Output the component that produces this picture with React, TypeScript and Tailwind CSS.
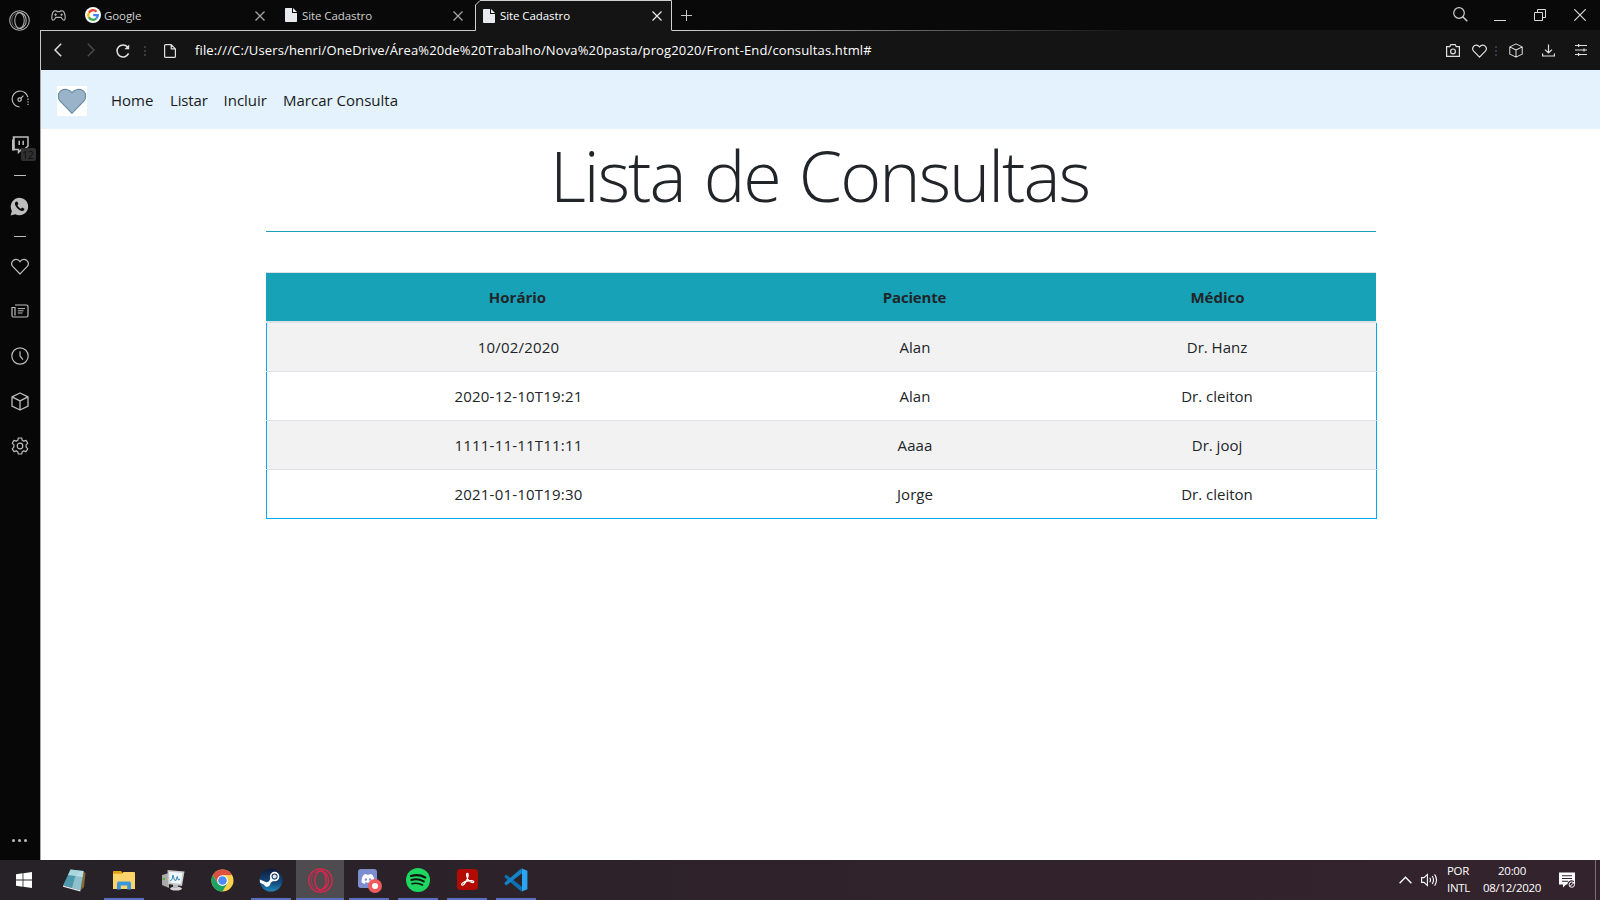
import type { ReactNode } from "react";
import { FaDiscord } from "react-icons/fa";

type IconProps = { w: number; h: number; className?: string; children: ReactNode };

function Icon({ w, h, className = "", children }: IconProps) {
  return (
    <svg
      width={w}
      height={h}
      viewBox={`0 0 ${w} ${h}`}
      fill="none"
      stroke="currentColor"
      strokeWidth={1.2}
      className={`shrink-0 ${className}`}
    >
      {children}
    </svg>
  );
}

const HEART = "M9 16 L1.9 8.7 A4.3 4.3 0 0 1 1.6 3.2 C3.2 0.6 7 0.7 9 3.6 C11 0.7 14.8 0.6 16.4 3.2 A4.3 4.3 0 0 1 16.1 8.7 Z";

function OperaRing({ size, className }: { size: number; className: string }) {
  return (
    <svg width={size} height={size} viewBox="0 0 24 24" fill="none" stroke="currentColor" strokeWidth={1.2} className={className}>
      <circle cx="12" cy="12" r="11.2" />
      <ellipse cx="12" cy="12" rx="5.4" ry="9" />
      <path d="M9.5 3.6 C12.5 1.6 19.6 4 19.6 12 S12.5 22.4 9.5 20.4" />
      <path d="M10 3.3 C5 4.3 3.3 8 3.3 12 S5 19.7 10 20.7" strokeWidth={0.6} />
    </svg>
  );
}

function Cube({ w, h, className }: { w: number; h: number; className?: string }) {
  return (
    <svg width={w} height={h} viewBox="0 0 18 19" fill="none" stroke="currentColor" strokeWidth={1.3} strokeLinejoin="round" className={className}>
      <path d="M9 1 L17 4.8 V14.2 L9 18 L1 14.2 V4.8 Z M1 4.8 L9 8.8 L17 4.8 M9 8.8 V18" />
    </svg>
  );
}

function Sidebar() {
  return (
    <aside className="flex w-10 shrink-0 flex-col items-center bg-[#070707] pr-px text-[#bdbdbd]">
      <div className="mt-2 flex h-6 items-center">
        <OperaRing size={21} className="text-[#b0b0b0]" />
      </div>
      <div className="mt-[55px] flex h-6 items-center">
        <Icon w={18} h={18}>
          <path d="M8.6 17 A8 8 0 1 1 16.9 7.2" />
          <path d="M17 8.6 V15" strokeDasharray="1.4 1.2" />
          <circle cx="8.6" cy="9.6" r="1.7" />
          <path d="M9.8 8.4 L12.4 5.6" />
        </Icon>
      </div>
      <div className="relative mt-[22px] flex h-6 items-center">
        <Icon w={18} h={18}>
          <path d="M2.5 1 L17 1 V10 L13.5 13.4 H10.5 L7.5 16.4 V13.4 H3 Z" strokeWidth={1.5} />
          <path d="M1 4 L3.6 1 V14.6 H1 Z" fill="currentColor" stroke="none" />
          <path d="M8.2 4.8 V9 M12.2 4.8 V9" strokeWidth={1.5} />
        </Icon>
        <span className="absolute top-[15px] left-[10px] flex h-[13px] w-[15px] items-center justify-center rounded-[2px] bg-[#303030] text-[10px] leading-none text-[#0c0c0c]">
          12
        </span>
      </div>
      <div className="mt-[18px] h-px w-3 bg-[#bdbdbd]" />
      <div className="mt-[18px] flex h-6 items-center">
        <svg width="19" height="19" viewBox="0 0 19 19">
          <path d="M0.6 18.4 L1.9 13.9 A8.7 8.7 0 1 1 5.3 17.2 Z" fill="#bdbdbd" />
          <path d="M6.2 4.6 C4.6 5.4 4.7 7.3 5.5 8.8 C6.9 11.4 9 13.2 11.7 13.9 C13.3 14.2 14.6 13 14.4 11.7 L12.2 10.6 L11 11.8 C9.4 11.2 8 9.8 7.4 8.3 L8.4 7.1 L7.4 4.7 Z" fill="#0a0a0a" />
        </svg>
      </div>
      <div className="mt-[18px] h-px w-3 bg-[#bdbdbd]" />
      <div className="mt-[17px] flex h-6 items-center">
        <Icon w={18} h={17}><path d={HEART} /></Icon>
      </div>
      <div className="mt-[21px] flex h-6 items-center">
        <Icon w={18} h={14}>
          <path d="M4 1 H15.5 Q17 1 17 2.5 V11.5 Q17 13 15.5 13 H2.5 Q1 13 1 11.5 V3.5 H4 V11.5" />
          <path d="M6.8 4.6 H14 M6.8 6.8 H12.5 M6.8 9 H11.5" strokeWidth={1} />
        </Icon>
      </div>
      <div className="mt-[21px] flex h-6 items-center">
        <Icon w={18} h={18}>
          <circle cx="9" cy="9" r="8.2" />
          <path d="M9 4.2 V9 L12 12.6" />
        </Icon>
      </div>
      <div className="mt-[21px] flex h-6 items-center"><Cube w={18} h={19} /></div>
      <div className="mt-[21px] flex h-6 items-center">
        <Icon w={18} h={18}>
          <path
            strokeLinejoin="round"
            d="M7.3 1 H10.7 L11.2 3.3 L12.7 4.1 L15 3.4 L16.8 6.2 L15.1 7.9 V10.1 L16.8 11.8 L15 14.6 L12.7 13.9 L11.2 14.7 L10.7 17 H7.3 L6.8 14.7 L5.3 13.9 L3 14.6 L1.2 11.8 L2.9 10.1 V7.9 L1.2 6.2 L3 3.4 L5.3 4.1 L6.8 3.3 Z"
          />
          <circle cx="9" cy="9" r="2.8" />
        </Icon>
      </div>
      <div className="mt-auto mb-2 flex h-6 items-center gap-[3px]">
        <i className="size-[3px] rounded-full bg-[#bdbdbd]" />
        <i className="size-[3px] rounded-full bg-[#bdbdbd]" />
        <i className="size-[3px] rounded-full bg-[#bdbdbd]" />
      </div>
    </aside>
  );
}

function CloseIcon({ className = "" }: { className?: string }) {
  return (
    <Icon w={10} h={10} className={className}>
      <path d="M0.5 0.5 L9.5 9.5 M9.5 0.5 L0.5 9.5" />
    </Icon>
  );
}

function DocIcon() {
  return (
    <svg width="12" height="14" viewBox="0 0 12 14" className="shrink-0">
      <path d="M0 0.8 Q0 0 0.8 0 H7 V5 H12 V13.2 Q12 14 11.2 14 H0.8 Q0 14 0 13.2 Z" fill="#e8eaed" />
      <path d="M8 0 L12 4 H8 Z" fill="#e8eaed" />
    </svg>
  );
}

function GoogleIcon() {
  return (
    <svg width="16" height="16" viewBox="0 0 16 16" className="shrink-0">
      <circle cx="8" cy="8" r="8" fill="#fff" />
      <g fill="none" strokeWidth="2.3">
        <path d="M3.9 5.6 A4.8 4.8 0 0 1 11.5 4.7" stroke="#ea4335" />
        <path d="M3.9 10.4 A4.8 4.8 0 0 1 3.9 5.6" stroke="#fbbc05" />
        <path d="M11.3 11.5 A4.8 4.8 0 0 1 3.9 10.4" stroke="#34a853" />
        <path d="M8.2 8.1 H12.8 A4.8 4.8 0 0 1 11.3 11.5" stroke="#4285f4" />
      </g>
    </svg>
  );
}

function TabBar() {
  return (
    <div className="flex h-[31px] bg-[#090909] text-[11.5px] tracking-[-0.08px] text-[#cfcfcf]">
      <div className="flex w-[435px] shrink-0 items-center border-b border-[#c8c8c8]">
        <Icon w={15} h={11} className="ml-[11px] text-[#b0b0b0]">
          <path d="M3.6 0.8 H5.4 L6.2 1.6 H8.8 L9.6 0.8 H11.4 C13.2 0.8 14.2 5 14.2 8 C14.2 10.6 12.4 10.6 11.3 9 L10.2 7.4 H4.8 L3.7 9 C2.6 10.6 0.8 10.6 0.8 8 C0.8 5 1.8 0.8 3.6 0.8 Z" />
          <path d="M4.6 3.4 V6 M3.3 4.7 H5.9 M9.4 4.7 H11.8 M10.6 3.5 V5.9" strokeWidth={1} />
        </Icon>
        <div className="ml-[19px] flex w-[195px] items-center">
          <GoogleIcon />
          <span className="ml-[3px] pt-[2px]">Google</span>
          <CloseIcon className="mt-px mr-[15px] ml-auto text-[#a8a8a8]" />
        </div>
        <div className="ml-[5px] flex flex-1 items-center">
          <DocIcon />
          <span className="ml-[5px] pt-[2px]">Site Cadastro</span>
          <CloseIcon className="mt-px mr-[12px] ml-auto text-[#a8a8a8]" />
        </div>
      </div>
      <div className="relative flex w-[197px] shrink-0 items-center bg-[#141414] text-white">
        <svg width="197" height="31" viewBox="0 0 197 31" className="absolute inset-0">
          <path d="M0 0 H6 L0 6 Z" fill="#090909" />
          <path d="M0 30.5 H0.5 V5 L5 0.5 H196.5 V30.5" fill="none" stroke="#d0d0d0" />
        </svg>
        <div className="relative flex flex-1 items-center">
          <span className="ml-2"><DocIcon /></span>
          <span className="ml-[5px]">Site Cadastro</span>
          <CloseIcon className="mr-[10px] ml-auto text-[#e8e8e8]" />
        </div>
      </div>
      <div className="flex flex-1 flex-col">
        <div className="flex h-[30px] items-center">
          <Icon w={11} h={11} className="ml-[9px] text-[#c8c8c8]">
            <path d="M5.5 0 V11 M0 5.5 H11" strokeWidth={1} />
          </Icon>
          <Icon w={15} h={15} className="mb-[2px] ml-auto">
            <circle cx="6" cy="6" r="5.3" />
            <path d="M9.8 9.8 L14.3 14.3" strokeWidth={1.5} />
          </Icon>
          <i className="mt-[11px] ml-[26px] h-px w-3 bg-[#d8d8d8]" />
          <Icon w={12} h={12} className="ml-[28px] text-[#d8d8d8]">
            <path d="M0.5 3.5 H8.5 V11.5 H0.5 Z M3.5 3.5 V0.5 H11.5 V8.5 H8.5" strokeWidth={1} />
          </Icon>
          <Icon w={12} h={12} className="mr-[14px] ml-[28px] text-[#d8d8d8]">
            <path d="M0.3 0.3 L11.7 11.7 M11.7 0.3 L0.3 11.7" />
          </Icon>
        </div>
        <div className="h-px bg-[#141414]">
          <div className="h-px w-[460px] bg-linear-to-r from-[#d0d0d0] to-[#141414]" />
        </div>
      </div>
    </div>
  );
}

function AddressBar() {
  const dots = (
    <span className="flex flex-col gap-[2px]">
      <i className="size-[2px] bg-[#3a3a44]" />
      <i className="size-[2px] bg-[#3a3a44]" />
      <i className="size-[2px] bg-[#3a3a44]" />
    </span>
  );
  return (
    <div className="flex h-[39px] items-center border-l border-[#c8c8c8] bg-[#141414] text-[#e0e0e0]">
      <Icon w={8} h={14} className="mb-px ml-[13px]"><path d="M7.2 0.8 L1 7 L7.2 13.2" strokeWidth={1.5} /></Icon>
      <Icon w={8} h={14} className="mb-px ml-[25px] text-[#4a4a4a]"><path d="M0.8 0.8 L7 7 L0.8 13.2" strokeWidth={1.5} /></Icon>
      <Icon w={14} h={14} className="ml-[21px]">
        <path d="M12.6 9.4 A6 6 0 1 1 11.6 3" strokeWidth={1.5} />
        <path d="M13.2 0.4 V5.2 H8.4 Z" fill="currentColor" stroke="none" />
      </Icon>
      <span className="ml-[14px]">{dots}</span>
      <Icon w={12} h={14} className="ml-[18px]">
        <path d="M0.6 1.6 Q0.6 0.6 1.6 0.6 H7.2 L11.4 4.8 V12.4 Q11.4 13.4 10.4 13.4 H1.6 Q0.6 13.4 0.6 12.4 Z M7.2 0.6 V4.8 H11.4" strokeLinejoin="round" />
      </Icon>
      <span className="ml-[19px] text-[13px] tracking-[0.14px] whitespace-nowrap text-white">
        file:///C:/Users/henri/OneDrive/Área%20de%20Trabalho/Nova%20pasta/prog2020/Front-End/consultas.html#
      </span>
      <Icon w={14} h={13} className="mb-px ml-auto">
        <path d="M0.6 2.6 H3.8 L4.8 0.6 H9.2 L10.2 2.6 H13.4 V12.4 H0.6 Z" />
        <circle cx="7" cy="7.4" r="2.4" />
      </Icon>
      <svg width="15" height="14" viewBox="0 0 18 17" fill="none" stroke="currentColor" strokeWidth={1.4} className="ml-[12px]">
        <path d={HEART} />
      </svg>
      <span className="ml-[8px]">{dots}</span>
      <Cube w={14} h={15} className="ml-[12px]" />
      <Icon w={13} h={13} className="ml-[19px]">
        <path d="M6.5 0.5 V9 M3 5.6 L6.5 9 L10 5.6 M0.6 9.6 V12 H12.4 V9.6" />
      </Icon>
      <Icon w={12} h={12} className="mr-[13px] mb-px ml-[20px]">
        <path d="M0 1.5 H12 M0 6 H12 M0 10.5 H12 M3.6 0 V3 M9 4.5 V7.5 M3.6 9 V12" />
      </Icon>
    </div>
  );
}

function Navbar() {
  return (
    <nav className="flex h-[59px] items-center bg-[#e3f2fd] text-[15px] text-[#1a1a1a]">
      <svg width="30" height="30" viewBox="0 0 30 30" className="mt-[3px] ml-4">
        <rect width="30" height="30" fill="#fff" />
        <path
          d="M15 27.3 L3.2 15.2 C0.4 12 1 7 3.6 4.9 C7.2 2.2 12.4 3.2 15 6.6 C17.6 3.2 22.8 2.2 26.4 4.9 C29 7 29.6 12 26.8 15.2 Z"
          fill="#9ab3c9"
          stroke="#5f8aa0"
          strokeWidth="1.1"
        />
      </svg>
      <ul className="ml-6 flex gap-4 pt-[2px]">
        <li className="w-[43px]">Home</li>
        <li className="w-[37.5px] tracking-[-0.15px]">Listar</li>
        <li className="w-[43.5px]">Incluir</li>
        <li className="whitespace-nowrap">Marcar Consulta</li>
      </ul>
    </nav>
  );
}

const rows = [
  ["10/02/2020", "Alan", "Dr. Hanz"],
  ["2020-12-10T19:21", "Alan", "Dr. cleiton"],
  ["1111-11-11T11:11", "Aaaa", "Dr. jooj"],
  ["2021-01-10T19:30", "Jorge", "Dr. cleiton"],
];

function Consultas() {
  return (
    <main className="mx-auto w-[1110px] text-[#212529]">
      <h1 className="flex h-[102px] items-center justify-center pr-[2px] pb-[10px] text-[70px] leading-none font-light tracking-[-2.05px] [word-spacing:3px]">
        Lista de Consultas
      </h1>
      <hr className="border-0 border-t border-[#17a2b8]" />
      <div className="mt-[40px] w-[1111px] text-center text-[15px]">
        <div className="mr-px grid h-[51px] grid-cols-[504px_290px_1fr] items-center border-t border-b-2 border-[#dee2e6] bg-[#17a2b8] font-bold">
          <span>Horário</span>
          <span className="tracking-[-0.2px]">Paciente</span>
          <span>Médico</span>
        </div>
        {rows.map(([when, patient, doctor], i) => (
          <div key={i} className="group">
            <div
              className={`grid h-12 grid-cols-[504px_289px_1fr] items-center border-x border-[#03a9f4] ${i % 2 === 0 ? "bg-[#f2f2f2]" : "bg-white"}`}
            >
              <span className="tracking-[0.2px]">{when}</span>
              <span className="tracking-[0.1px]">{patient}</span>
              <span className="pr-px">{doctor}</span>
            </div>
            <div className="h-px bg-[#dee2e6] group-last:bg-[#03a9f4]" />
          </div>
        ))}
      </div>
    </main>
  );
}

function NotepadIcon() {
  return (
    <svg width="24" height="24" viewBox="0 0 24 24" className="mr-[2px] mb-px">
      <path d="M20 3 L23.5 5 L22 19 L19 22 Z" fill="#8a6a34" />
      <path d="M8.5 1.5 L21.5 3 L18.5 22.3 L1 17.5 Z" fill="#4f97aa" />
      <path d="M8.5 1.5 L21.5 3 L20.5 9 L6 7 Z" fill="#a9d5df" />
      <path d="M13 9 L18 3 L21.5 3 L18.5 22.3 L10 20 Z" fill="#c3e4ea" opacity=".55" />
      <path d="M1 17.5 L18.5 22.3 L18.3 23.4 L1 18.8 Z" fill="#e8eef0" />
    </svg>
  );
}

function ExplorerIcon() {
  return (
    <svg width="24" height="20" viewBox="0 0 24 20">
      <path d="M1 3 V1.6 Q1 1 1.6 1 H9 L11 3.2 V4 H1 Z" fill="#e5a111" />
      <path d="M1 3.8 H10 L11.5 2 H22 Q23 2 23 3 V19 H1 Z" fill="#fbd56b" />
      <path d="M5 19.6 V13 Q5 11.4 6.6 11.4 H17.4 Q19 11.4 19 13 V19.6 H15.2 V15.6 H8.8 V19.6 Z" fill="#3b97dc" />
    </svg>
  );
}

function MonitorIcon() {
  return (
    <svg width="24" height="22" viewBox="0 0 24 22">
      <path d="M1 6 L8 4 V19 L1 16 Z" fill="#a8aaa8" />
      <path d="M1.5 9 H4 V11 H1.5 Z" fill="#6aa84f" />
      <ellipse cx="15" cy="19.6" rx="6" ry="2" fill="#d4d4d4" />
      <path d="M12 15 H17 V19 H12 Z" fill="#b8b8b8" />
      <path d="M6.5 1 L23.5 2.4 L21 17 L7 15 Z" fill="#c9c9c9" />
      <path d="M8 2.8 L21.5 3.8 L19.8 14.8 L8.6 13.4 Z" fill="#eef6fc" />
      <path d="M9 12 L11 10.5 L12 6 L13.4 11 L15 11.5 L16.2 7.5 L17.3 11 L19 10" fill="none" stroke="#3d84b8" />
    </svg>
  );
}

function ChromeIcon() {
  return (
    <svg width="23" height="23" viewBox="0 0 24 24">
      <circle cx="12" cy="12" r="11.5" fill="#fdd14d" />
      <path d="M2.04 6.25 A11.5 11.5 0 0 1 21.96 6.25 H12 L7 14.9 Z" fill="#dd5144" />
      <path d="M2.04 6.25 A11.5 11.5 0 0 0 12 23.5 L17 14.9 L12 17.75 L7 14.9 Z" fill="#1da462" />
      <circle cx="12" cy="12" r="5.6" fill="#fff" />
      <circle cx="12" cy="12" r="4.5" fill="#4c8bf5" />
    </svg>
  );
}

function SteamIcon() {
  return (
    <svg width="24" height="24" viewBox="0 0 24 24">
      <defs>
        <linearGradient id="steam" x1="0" y1="0" x2="0" y2="1">
          <stop offset="0" stopColor="#101a3a" />
          <stop offset="0.6" stopColor="#114a7c" />
          <stop offset="1" stopColor="#2187bb" />
        </linearGradient>
      </defs>
      <circle cx="12" cy="12" r="11.5" fill="url(#steam)" />
      <circle cx="15.6" cy="8.6" r="3.9" fill="none" stroke="#fff" strokeWidth="1.7" />
      <circle cx="15.6" cy="8.6" r="2" fill="#e4e8ee" />
      <path d="M0.8 11.6 L7.4 14.2 L9.8 13.6 L12 9.6 L15 12.6 L11.6 14.8 C11.6 19.4 6.2 20 5.2 16.8 L1 14.8 Z" fill="#fff" />
    </svg>
  );
}

function DiscordIcon() {
  return (
    <span className="relative flex size-[22px] items-center justify-center">
      <span className="mr-[3px] mb-[3px] flex size-[19px] items-center justify-center rounded-[3px] bg-[#7d8ed0] text-white">
        <FaDiscord size={14} />
      </span>
      <span className="absolute -right-[2px] -bottom-[2px] flex size-[14px] items-center justify-center rounded-full bg-[#ef5a5f]">
        <i className="size-[6px] rounded-full bg-white" />
      </span>
    </span>
  );
}

function SpotifyIcon() {
  return (
    <svg width="24" height="24" viewBox="0 0 24 24">
      <circle cx="12" cy="12" r="12" fill="#1ed760" />
      <g fill="none" stroke="#121212" strokeLinecap="round">
        <path d="M5 8 C9.5 6.6 15 7.1 19.2 9.4" strokeWidth="2.3" />
        <path d="M5.4 12 C9.4 10.8 14 11.3 17.8 13.4" strokeWidth="2" />
        <path d="M6 15.7 C9.4 14.8 13.2 15.1 16.5 17" strokeWidth="1.6" />
      </g>
    </svg>
  );
}

function AcrobatIcon() {
  return (
    <svg width="21" height="21" viewBox="0 0 21 21" className="mb-px">
      <rect width="21" height="21" rx="3.5" fill="#b30b00" />
      <path
        d="M4.6 15.8 C4 14.6 7 12.8 10.2 12 C13.4 11.2 16.6 11.4 16.8 12.8 C16.8 14.2 13.6 13.6 11.8 11.4 C9.6 8.8 9 4.6 10.3 4.3 C11.8 4.2 11.2 8 9.6 11.4 C8 14.8 5.4 17.2 4.6 15.8 Z"
        fill="none"
        stroke="#fff"
        strokeWidth="1.3"
      />
    </svg>
  );
}

function CodeIcon() {
  return (
    <svg width="24" height="24" viewBox="0 0 24 24">
      <path d="M0.6 8 L2.2 6.6 L18.4 19 L17.2 23.6 L0.6 9.4 Z" fill="#0c6fb4" />
      <path d="M0.6 16 L2.2 17.4 L18.4 5 L17.2 0.4 L0.6 14.6 Z" fill="#1583c7" />
      <path d="M17.2 0.2 L23.4 2.8 V21.2 L17.2 23.8 Q18 23.4 18 22 V2 Q18 0.6 17.2 0.2 Z" fill="#2aa5f2" />
    </svg>
  );
}

const apps: { icon: ReactNode; open?: boolean; active?: boolean }[] = [
  { icon: <NotepadIcon /> },
  { icon: <ExplorerIcon />, open: true },
  { icon: <MonitorIcon /> },
  { icon: <ChromeIcon /> },
  { icon: <SteamIcon />, open: true },
  { icon: <OperaRing size={25} className="text-[#e8214b]" />, open: true, active: true },
  { icon: <DiscordIcon />, open: true },
  { icon: <SpotifyIcon />, open: true },
  { icon: <AcrobatIcon />, open: true },
  { icon: <CodeIcon />, open: true },
];

function Taskbar() {
  return (
    <footer className="flex h-10 shrink-0 bg-linear-to-r from-[#262227] via-[#30222b] to-[#33232d] text-white">
      <div className="flex w-12 items-center justify-center">
        <svg width="16" height="16" viewBox="0 0 16 16" fill="#fff">
          <path d="M0 2.2 L6.6 1.3 V7.6 H0 Z M7.4 1.2 L16 0 V7.6 H7.4 Z M0 8.4 H6.6 V14.7 L0 13.8 Z M7.4 8.4 H16 V16 L7.4 14.8 Z" />
        </svg>
      </div>
      <div className="ml-[3px] flex gap-px">
        {apps.map(({ icon, open, active }, i) => (
          <div key={i} className={`flex w-12 flex-col items-center ${active ? "bg-[#4f4c50]" : ""}`}>
            <div className="flex h-[38px] items-center pt-[2px]">{icon}</div>
            {open && <div className={`h-[2px] bg-[#5a6fc0] ${active ? "w-12" : "w-10"}`} />}
          </div>
        ))}
      </div>
      <div className="ml-auto flex items-center text-[11.5px] leading-[17px] tracking-[-0.3px]">
        <Icon w={13} h={8}><path d="M0.6 7.2 L6.5 1.2 L12.4 7.2" strokeWidth={1.3} /></Icon>
        <Icon w={17} h={14} className="ml-[9px]">
          <path d="M0.6 4.6 H3 L6.4 1.4 V12.6 L3 9.4 H0.6 Z" strokeWidth={1.1} />
          <path d="M8.8 4.8 Q10.2 7 8.8 9.2 M11.2 3 Q13.8 7 11.2 11 M13.6 1.4 Q17.4 7 13.6 12.6" strokeWidth={1.1} />
        </Icon>
        <div className="mb-[2px] ml-[9px] w-6">
          <div>POR</div>
          <div>INTL</div>
        </div>
        <div className="mb-[2px] ml-[11px] w-[60px] text-center">
          <div>20:00</div>
          <div>08/12/2020</div>
        </div>
        <svg width="17" height="17" viewBox="0 0 17 17" className="ml-[17px]">
          <path d="M0 0.5 H16 V12.5 H7 L4 15.5 V12.5 H0 Z" fill="#fff" />
          <path d="M3 3.7 H13 M3 6.5 H13 M3 9.3 H9" stroke="#33232d" strokeWidth="1.1" />
          <path d="M9.6 12.8 A3 3 0 0 1 13.4 9.8 A3.4 3.4 0 0 0 15.4 13.8 A3 3 0 0 1 9.6 12.8 Z" fill="#33232d" stroke="#33232d" strokeWidth="2.6" />
          <circle cx="12.8" cy="12.6" r="2.7" fill="none" stroke="#fff" />
          <path d="M11 14.4 L14.6 10.8" stroke="#fff" />
        </svg>
        <i className="ml-[19px] h-10 w-px bg-[#77707a]" />
        <i className="w-[4px]" />
      </div>
    </footer>
  );
}

export default function App() {
  return (
    <div className="flex h-[900px] w-[1600px] flex-col overflow-hidden bg-white font-['Open_Sans','Noto_Sans',sans-serif]">
      <div className="flex min-h-0 flex-1">
        <Sidebar />
        <div className="flex flex-1 flex-col">
          <TabBar />
          <AddressBar />
          <div className="flex-1 border-l border-[#a8a8a8]">
            <Navbar />
            <Consultas />
          </div>
        </div>
      </div>
      <Taskbar />
    </div>
  );
}
